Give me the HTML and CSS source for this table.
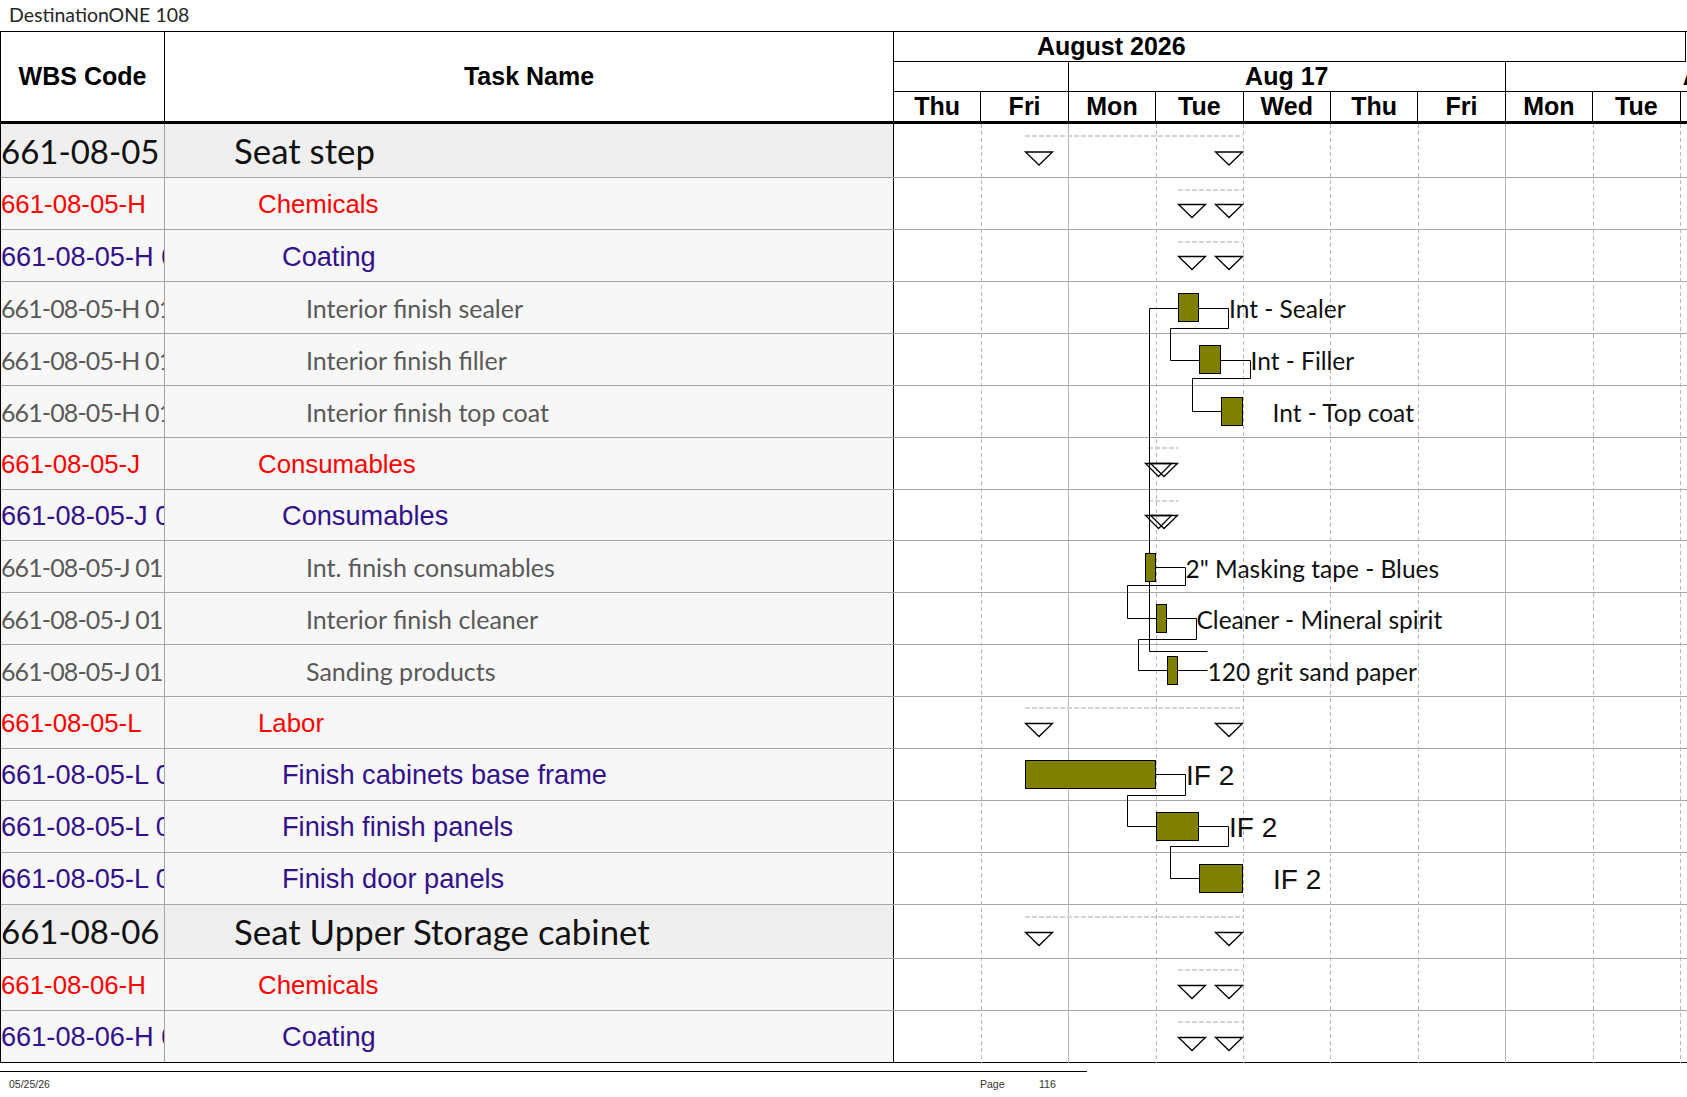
FILE: index.html
```html
<!DOCTYPE html>
<html lang="en">
<head>
<meta charset="utf-8">
<title>DestinationONE 108</title>
<link rel="stylesheet" href="styles.css">
</head>
<body>
<div class="title">DestinationONE 108</div>
<div class="sheet">
  <div class="head">
    <div class="hcell hwbs">WBS Code</div>
    <div class="hcell htask">Task Name</div>
    <div class="hchart">
      <div class="month"><span class="month-label">August 2026</span></div>
      <div class="week">
        <div class="wk"></div>
        <div class="wk wk-center">Aug 17</div>
        <div class="wk wk-next">Aug 24</div>
      </div>
      <div class="days">
        <div class="day">Thu</div>
        <div class="day">Fri</div>
        <div class="day">Mon</div>
        <div class="day">Tue</div>
        <div class="day">Wed</div>
        <div class="day">Thu</div>
        <div class="day">Fri</div>
        <div class="day">Mon</div>
        <div class="day">Tue</div>
        <div class="day day-last"></div>
      </div>
    </div>
  </div>
  <div class="rows">
    <div class="row sum sum1"><div class="wbs">661-08-05</div><div class="task lv0">Seat step</div><div class="chart"></div></div>
    <div class="row red"><div class="wbs">661-08-05-H</div><div class="task lv1">Chemicals</div><div class="chart"></div></div>
    <div class="row purple"><div class="wbs">661-08-05-H 01</div><div class="task lv2">Coating</div><div class="chart"></div></div>
    <div class="row gray"><div class="wbs">661-08-05-H 01 01</div><div class="task lv3">Interior finish sealer</div><div class="chart"></div></div>
    <div class="row gray"><div class="wbs">661-08-05-H 01 02</div><div class="task lv3">Interior finish filler</div><div class="chart"></div></div>
    <div class="row gray"><div class="wbs">661-08-05-H 01 03</div><div class="task lv3">Interior finish top coat</div><div class="chart"></div></div>
    <div class="row red"><div class="wbs">661-08-05-J</div><div class="task lv1">Consumables</div><div class="chart"></div></div>
    <div class="row purple"><div class="wbs">661-08-05-J 01</div><div class="task lv2">Consumables</div><div class="chart"></div></div>
    <div class="row gray"><div class="wbs">661-08-05-J 01 01</div><div class="task lv3">Int. finish consumables</div><div class="chart"></div></div>
    <div class="row gray"><div class="wbs">661-08-05-J 01 02</div><div class="task lv3">Interior finish cleaner</div><div class="chart"></div></div>
    <div class="row gray"><div class="wbs">661-08-05-J 01 03</div><div class="task lv3">Sanding products</div><div class="chart"></div></div>
    <div class="row red"><div class="wbs">661-08-05-L</div><div class="task lv1">Labor</div><div class="chart"></div></div>
    <div class="row purple"><div class="wbs">661-08-05-L 01</div><div class="task lv2">Finish cabinets base frame</div><div class="chart"></div></div>
    <div class="row purple"><div class="wbs">661-08-05-L 02</div><div class="task lv2">Finish finish panels</div><div class="chart"></div></div>
    <div class="row purple"><div class="wbs">661-08-05-L 03</div><div class="task lv2">Finish door panels</div><div class="chart"></div></div>
    <div class="row sum sum2"><div class="wbs">661-08-06</div><div class="task lv0">Seat Upper Storage cabinet</div><div class="chart"></div></div>
    <div class="row red"><div class="wbs">661-08-06-H</div><div class="task lv1">Chemicals</div><div class="chart"></div></div>
    <div class="row purple"><div class="wbs">661-08-06-H 01</div><div class="task lv2">Coating</div><div class="chart"></div></div>

    <svg class="gantt" width="793" height="940" viewBox="0 0 793 940" xmlns="http://www.w3.org/2000/svg">
      <g class="grid">
        <line x1="87.5" y1="0" x2="87.5" y2="940" class="dash"/>
        <line x1="174.5" y1="0" x2="174.5" y2="940"/>
        <line x1="262.5" y1="0" x2="262.5" y2="940" class="dash"/>
        <line x1="349.5" y1="0" x2="349.5" y2="940" class="dash"/>
        <line x1="436.5" y1="0" x2="436.5" y2="940" class="dash"/>
        <line x1="524.5" y1="0" x2="524.5" y2="940" class="dash"/>
        <line x1="611.5" y1="0" x2="611.5" y2="940"/>
        <line x1="699.5" y1="0" x2="699.5" y2="940" class="dash"/>
        <line x1="786.5" y1="0" x2="786.5" y2="940" class="dash"/>
      </g>
      <g class="sumline">
        <line x1="131" y1="12" x2="349" y2="12"/>
        <line x1="284" y1="66" x2="349" y2="66"/>
        <line x1="284" y1="118" x2="349" y2="118"/>
        <line x1="254" y1="324" x2="284" y2="324"/>
        <line x1="254" y1="377" x2="284" y2="377"/>
        <line x1="131" y1="584" x2="349" y2="584"/>
        <line x1="131" y1="793" x2="349" y2="793"/>
        <line x1="284" y1="846" x2="349" y2="846"/>
        <line x1="284" y1="898" x2="349" y2="898"/>
      </g>
      <g class="link">
        <polyline points="284,184.5 255.5,184.5 255.5,527.5 313.5,527.5"/>
        <polyline points="304,184.5 334.5,184.5 334.5,204.5 276.5,204.5 276.5,236.5 305,236.5"/>
        <polyline points="327,236.5 356.5,236.5 356.5,254.5 298.5,254.5 298.5,287.5 327,287.5"/>
        <polyline points="261.5,443.5 291.5,443.5 291.5,461.5 233.5,461.5 233.5,494.5 262,494.5"/>
        <polyline points="272.5,494.5 302.5,494.5 302.5,515.5 244.5,515.5 244.5,546.5 273,546.5"/>
        <polyline points="283.5,546.5 313.5,546.5"/>
        <polyline points="261.5,650.5 291.5,650.5 291.5,671.5 233.5,671.5 233.5,702.5 262,702.5"/>
        <polyline points="304.5,702.5 334.5,702.5 334.5,722.5 276.5,722.5 276.5,754.5 305,754.5"/>
      </g>
      <g class="summ">
        <polygon points="131.5,28 158.5,28 145,41"/>
        <polygon points="321.5,28 348.5,28 335,41"/>
        <polygon points="284.5,80.5 311.5,80.5 298,93.5"/>
        <polygon points="321.5,80.5 348.5,80.5 335,93.5"/>
        <polygon points="284.5,132.5 311.5,132.5 298,145.5"/>
        <polygon points="321.5,132.5 348.5,132.5 335,145.5"/>
        <polygon points="251.5,339.5 277.5,339.5 264.5,352.5"/>
        <polygon points="256.5,339.5 283.5,339.5 270,352.5"/>
        <polygon points="251.5,391.5 277.5,391.5 264.5,404.5"/>
        <polygon points="256.5,391.5 283.5,391.5 270,404.5"/>
        <polygon points="131.5,599.5 158.5,599.5 145,612.5"/>
        <polygon points="321.5,599.5 348.5,599.5 335,612.5"/>
        <polygon points="131.5,808.5 158.5,808.5 145,821.5"/>
        <polygon points="321.5,808.5 348.5,808.5 335,821.5"/>
        <polygon points="284.5,861.5 311.5,861.5 298,874.5"/>
        <polygon points="321.5,861.5 348.5,861.5 335,874.5"/>
        <polygon points="284.5,913.5 311.5,913.5 298,926.5"/>
        <polygon points="321.5,913.5 348.5,913.5 335,926.5"/>
      </g>
      <g class="bar">
        <rect x="284.5" y="169.5" width="20" height="28"/>
        <rect x="305.5" y="221.5" width="21" height="28"/>
        <rect x="327.5" y="273.5" width="21" height="28"/>
        <rect x="251.5" y="429.5" width="10" height="28"/>
        <rect x="262.5" y="480.5" width="10" height="28"/>
        <rect x="273.5" y="532.5" width="10" height="28"/>
        <rect x="131.5" y="636.5" width="130" height="28"/>
        <rect x="262.5" y="688.5" width="42" height="28"/>
        <rect x="305.5" y="740.5" width="43" height="28"/>
      </g>
      <g class="lbl">
        <text x="335" y="193.5">Int - Sealer</text>
        <text x="356.5" y="245.5">Int - Filler</text>
        <text x="378.5" y="297.5">Int - Top coat</text>
        <text x="291.5" y="453.5">2" Masking tape - Blues</text>
        <text x="302.5" y="504.5">Cleaner - Mineral spirit</text>
        <text x="313.5" y="556.5">120 grit sand paper</text>
      </g>
      <g class="lbl-if">
        <text x="292" y="661">IF 2</text>
        <text x="335" y="713">IF 2</text>
        <text x="379" y="765">IF 2</text>
      </g>
    </svg>
  </div>
</div>
<div class="footer">
  <span class="f-date">05/25/26</span>
  <span class="f-page">Page</span>
  <span class="f-num">116</span>
</div>
</body>
</html>
```
FILE: styles.css
```css
html, body {
  margin: 0;
  padding: 0;
  background: #ffffff;
}
body {
  width: 1687px;
  height: 1097px;
  overflow: hidden;
  font-family: "Liberation Sans", Arial, sans-serif;
  color: #000;
}
.title {
  height: 31px;
  line-height: 30px;
  padding-left: 9px;
  font-family: Lato, "Liberation Sans", sans-serif;
  font-size: 19.5px;
  color: #262626;
}
.sheet {
  border-top: 1px solid #000;
  border-left: 1px solid #000;
  width: 1686px;
  overflow: hidden;
}
.head {
  display: grid;
  grid-template-columns: 164px 729px 1fr;
  height: 92px;
  box-sizing: border-box;
  border-bottom: 3px solid #000;
}
.hcell {
  display: flex;
  align-items: center;
  justify-content: center;
  font-weight: bold;
  font-size: 25px;
}
.hwbs { border-right: 1px solid #000; }
.htask { border-right: 1px solid #000; }
.hchart {
  display: flex;
  flex-direction: column;
  font-weight: bold;
  font-size: 25px;
}
.month {
  height: 30px;
  width: 792px;
  box-sizing: border-box;
  border-bottom: 1px solid #000;
  border-right: 1px solid #000;
  display: flex;
  align-items: center;
  padding-left: 143px;
}
.week {
  height: 30px;
  box-sizing: border-box;
  border-bottom: 1px solid #000;
  display: grid;
  grid-template-columns: 174.8px 437px 1fr;
}
.wk {
  border-right: 1px solid #000;
  display: flex;
  align-items: center;
  overflow: hidden;
  white-space: nowrap;
}
.wk-center { justify-content: center; }
.wk-next {
  border-right: 0;
  padding-left: 177px;
}
.days {
  height: 29px;
  display: grid;
  grid-template-columns: repeat(9, 87.4px) 1fr;
}
.day {
  border-right: 1px solid #000;
  display: flex;
  align-items: center;
  justify-content: center;
}
.day-last { border-right: 0; }

.rows {
  position: relative;
}
.row {
  display: grid;
  grid-template-columns: 164px 729px 1fr;
  height: 51.9px;
  box-sizing: border-box;
  border-bottom: 1px solid #a6a6a6;
}
.row:nth-last-child(2) { border-bottom-color: #000; }
.row.sum { height: 54.2px; }
.wbs, .task {
  display: flex;
  align-items: center;
  white-space: nowrap;
  overflow: hidden;
  background: #f7f7f7;
}
.wbs { border-right: 1px solid #a6a6a6; }
.task { border-right: 1px solid #000; }
.chart { background: #fff; }
.sum .wbs, .sum .task { background: #efefef; }

.lv0 { padding-left: 69px; }
.lv1 { padding-left: 93px; }
.lv2 { padding-left: 117px; }
.lv3 { padding-left: 141px; }

.sum .wbs, .sum .task {
  font-family: Lato, "Liberation Sans", sans-serif;
  color: #111;
}
.sum .wbs { font-size: 33px; }
.sum .task { font-size: 34.8px; }
.red .wbs, .red .task {
  font-size: 25.8px;
  color: #ff0000;
  padding-top: 2px;
  box-sizing: border-box;
}
.purple .wbs, .purple .task {
  font-size: 27.2px;
  color: #33118a;
  padding-top: 2px;
  box-sizing: border-box;
}
.gray .wbs, .gray .task {
  font-family: Lato, "Liberation Sans", sans-serif;
  font-size: 25px;
  color: #595959;
  padding-top: 1px;
  box-sizing: border-box;
}
.gray .wbs { letter-spacing: -0.9px; }

.gantt {
  position: absolute;
  left: 893px;
  top: 0;
}
.grid line {
  stroke: #b8b8b8;
  stroke-width: 1;
}
.grid line.dash { stroke-dasharray: 4 3; }
.sumline line {
  stroke: #d4d4d4;
  stroke-width: 2;
  stroke-dasharray: 5 2;
}
.link polyline {
  fill: none;
  stroke: #000;
  stroke-width: 1;
}
.summ polygon {
  fill: none;
  stroke: #000;
  stroke-width: 1.3;
}
.bar rect {
  fill: #808000;
  stroke: #000;
  stroke-width: 1;
}
.lbl text {
  font-family: Lato, "Liberation Sans", sans-serif;
  font-size: 24.5px;
  fill: #111;
}
.lbl-if text {
  font-family: "Liberation Sans", Arial, sans-serif;
  font-size: 28px;
  fill: #111;
}

.footer {
  margin-top: 8px;
  width: 1087px;
  border-top: 1px solid #000;
  display: grid;
  grid-template-columns: 971px 59px auto;
  padding: 6px 0 0 9px;
  box-sizing: border-box;
  font-size: 10.5px;
  line-height: 12px;
  color: #333;
}
```
